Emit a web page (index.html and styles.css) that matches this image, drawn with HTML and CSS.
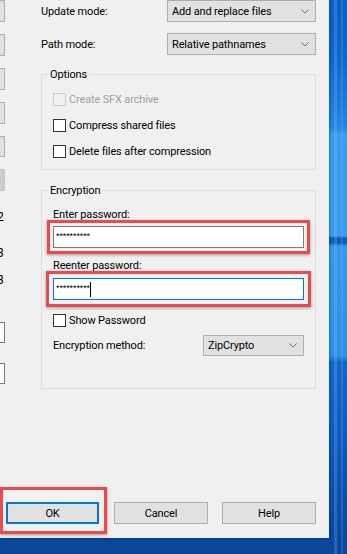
FILE: index.html
```html
<!DOCTYPE html>
<html>
<head>
<meta charset="utf-8">
<link rel="stylesheet" href="styles.css">
</head>
<body>
<div class="screen">
  <div class="dialog">
    <div class="body">
      <div class="side">
        <div class="stubs">
          <div class="stub"></div>
          <div class="stub"></div>
          <div class="stub"></div>
          <div class="stub"></div>
          <div class="stub short"></div>
          <div class="stub filled"></div>
        </div>
        <div class="digit d1">2</div>
        <div class="digit d2">3</div>
        <div class="digit d3">3</div>
        <div class="stub white w1"></div>
        <div class="stub white w2"></div>
      </div>
      <div class="main">
        <div class="row first">
          <span class="label">Update mode:</span>
          <div class="select wide"><span>Add and replace files</span><svg class="chev" width="8" height="5" viewBox="0 0 8 5"><path d="M0.5 0.5 L4 4 L7.5 0.5" fill="none" stroke="#6d6d6d" stroke-width="1"/></svg></div>
        </div>
        <div class="row second">
          <span class="label">Path mode:</span>
          <div class="select wide"><span>Relative pathnames</span><svg class="chev" width="8" height="5" viewBox="0 0 8 5"><path d="M0.5 0.5 L4 4 L7.5 0.5" fill="none" stroke="#6d6d6d" stroke-width="1"/></svg></div>
        </div>
        <fieldset class="group options">
          <legend>Options</legend>
          <div class="check disabled"><span class="box"></span><span>Create SFX archive</span></div>
          <div class="check"><span class="box"></span><span>Compress shared files</span></div>
          <div class="check"><span class="box"></span><span>Delete files after compression</span></div>
        </fieldset>
        <fieldset class="group enc">
          <legend>Encryption</legend>
          <div class="flabel l1">Enter password:</div>
          <div class="hl hl1"><div class="input"><span class="stars">**********</span></div></div>
          <div class="flabel l2">Reenter password:</div>
          <div class="hl hl2"><div class="input focus"><span class="stars">**********</span><span class="caret"></span></div></div>
          <div class="check show"><span class="box"></span><span>Show Password</span></div>
          <div class="method">
            <span class="label">Encryption method:</span>
            <div class="select small"><span>ZipCrypto</span><svg class="chev" width="8" height="5" viewBox="0 0 8 5"><path d="M0.5 0.5 L4 4 L7.5 0.5" fill="none" stroke="#6d6d6d" stroke-width="1"/></svg></div>
          </div>
        </fieldset>
      </div>
    </div>
    <div class="buttons">
      <div class="hl hlok"><div class="btn ok">OK</div></div>
      <div class="btn cancel">Cancel</div>
      <div class="btn help">Help</div>
    </div>
  </div>
</div>
</body>
</html>
```
FILE: styles.css
```css
html, body {
  margin: 0;
  padding: 0;
}
body {
  width: 347px;
  height: 554px;
  overflow: hidden;
  font-family: Roboto, "Liberation Sans", Arial, sans-serif;
  font-size: 11px;
  letter-spacing: -0.15px;
  color: #000;
}
.screen {
  width: 347px;
  height: 554px;
  background:
    linear-gradient(90deg, rgba(255,255,255,0) 0, rgba(255,255,255,0) 334px, rgba(120,200,255,0.25) 334px, rgba(120,200,255,0.25) 337px, rgba(255,255,255,0) 337px, rgba(255,255,255,0) 341px, rgba(120,200,255,0.2) 341px, rgba(120,200,255,0.2) 343px, rgba(255,255,255,0) 343px),
    linear-gradient(180deg, #0c5fc4 0, #0e64c8 50px, #1a74d6 90px, #2486e0 128px, #3a9cec 134px, #3a9bea 236px, #0f5cb8 238px, #0f5cb8 243px, #3598e8 246px, #2e90e4 356px, #1466c8 362px, #0f5cc0 430px, #0b4ea8 500px, #0a4599 554px);
}
.dialog {
  width: 329px;
  height: 538px;
  background: #f0f0f0;
  display: flex;
  flex-direction: column;
  box-shadow: 1px 1px 2px rgba(0,0,0,0.25);
}
.body {
  flex: 1;
  display: flex;
}
.side {
  width: 41px;
  overflow: hidden;
  display: flex;
  flex-direction: column;
}
.stubs {
  display: flex;
  flex-direction: column;
  gap: 12px;
}
.stub {
  width: 5px;
  height: 22px;
  background: #e1e1e1;
  border: 1px solid #adadad;
  border-left: none;
  box-sizing: border-box;
}
.stub.short { height: 21px; }
.stub.filled { background: #cccccc; border-color: #c4c4c4; }
.stub.white { background: #fff; border-color: #7a7a7a; height: 21px; }
.w1 { margin-top: 35px; }
.w2 { margin-top: 20px; }
.digit {
  margin-left: -3px;
  line-height: 14px;
  height: 14px;
  font-size: 12px;
}
.d1 { margin-top: 19px; }
.d2 { margin-top: 22px; }
.d3 { margin-top: 13px; }
.main {
  width: 275px;
  display: flex;
  flex-direction: column;
}
.row {
  display: flex;
  align-items: center;
  height: 22px;
}
.row.second { margin-top: 11px; }
.label {
  flex: 1;
}
.select {
  height: 22px;
  box-sizing: border-box;
  background: #e1e1e1;
  border: 1px solid #adadad;
  display: flex;
  align-items: center;
  padding-left: 4px;
  padding-right: 6px;
}
.select span { flex: 1; }
.select.wide { width: 149px; }
.select.small { width: 101px; height: 21px; }
.chev { display: block; }
.group {
  margin: 0;
  padding: 0 11px;
  border: 1px solid #dcdcdc;
  min-width: 0;
}
.group legend {
  padding: 2px 2px 0 2px;
  margin-left: -5px;
  line-height: 14px;
}
.options {
  margin-top: 11px;
  padding-top: 4px;
  padding-bottom: 5px;
}
.check {
  display: flex;
  align-items: center;
  gap: 3px;
  height: 26px;
}
.box {
  width: 13px;
  height: 13px;
  box-sizing: border-box;
  border: 1px solid #333;
  background: #fff;
}
.check.disabled { color: #a0a0a0; }
.check.disabled .box { border-color: #cccccc; background: #f0f0f0; }
.enc {
  margin-top: 12px;
  padding-top: 10px;
  padding-bottom: 32px;
}
.flabel { line-height: 14px; }
.l2 { margin-top: 11px; }
.hl {
  border: 3px solid #e84a4d;
  box-shadow: 0 1px 3px rgba(0,0,0,0.35);
}
.hl1 { padding: 3px; margin: -2px -6px -6px -6px; }
.hl2 { padding: 4px; margin: -2px -7px -7px -7px; }
.input {
  height: 22px;
  box-sizing: border-box;
  background: #fff;
  border: 1px solid #7a7a7a;
  display: flex;
  align-items: center;
  padding-left: 2px;
}
.input.focus { border-color: #0078d7; }
.stars {
  font-family: "Liberation Sans", Arial, sans-serif;
  font-size: 9px;
  letter-spacing: -0.1px;
  line-height: 9px;
  margin-top: -2px;
}
.caret {
  width: 1px;
  height: 15px;
  background: #000;
  margin-left: 0;
}
.check.show { height: 20px; margin-top: 10px; }
.method {
  display: flex;
  align-items: center;
  height: 22px;
  margin-top: 4px;
}
.buttons {
  display: flex;
  align-items: center;
  padding-left: 6px;
  padding-bottom: 14px;
  gap: 15px;
}
.btn {
  width: 94px;
  height: 22px;
  box-sizing: border-box;
  background: #e1e1e1;
  border: 1px solid #adadad;
  display: flex;
  align-items: center;
  justify-content: center;
}
.btn.ok { width: 93px; border: 2px solid #0078d7; }
.hlok { padding: 12px 5px 7px 3px; margin: -15px -8px -10px -6px; }
.btn.help { margin-left: -1px; }
```
